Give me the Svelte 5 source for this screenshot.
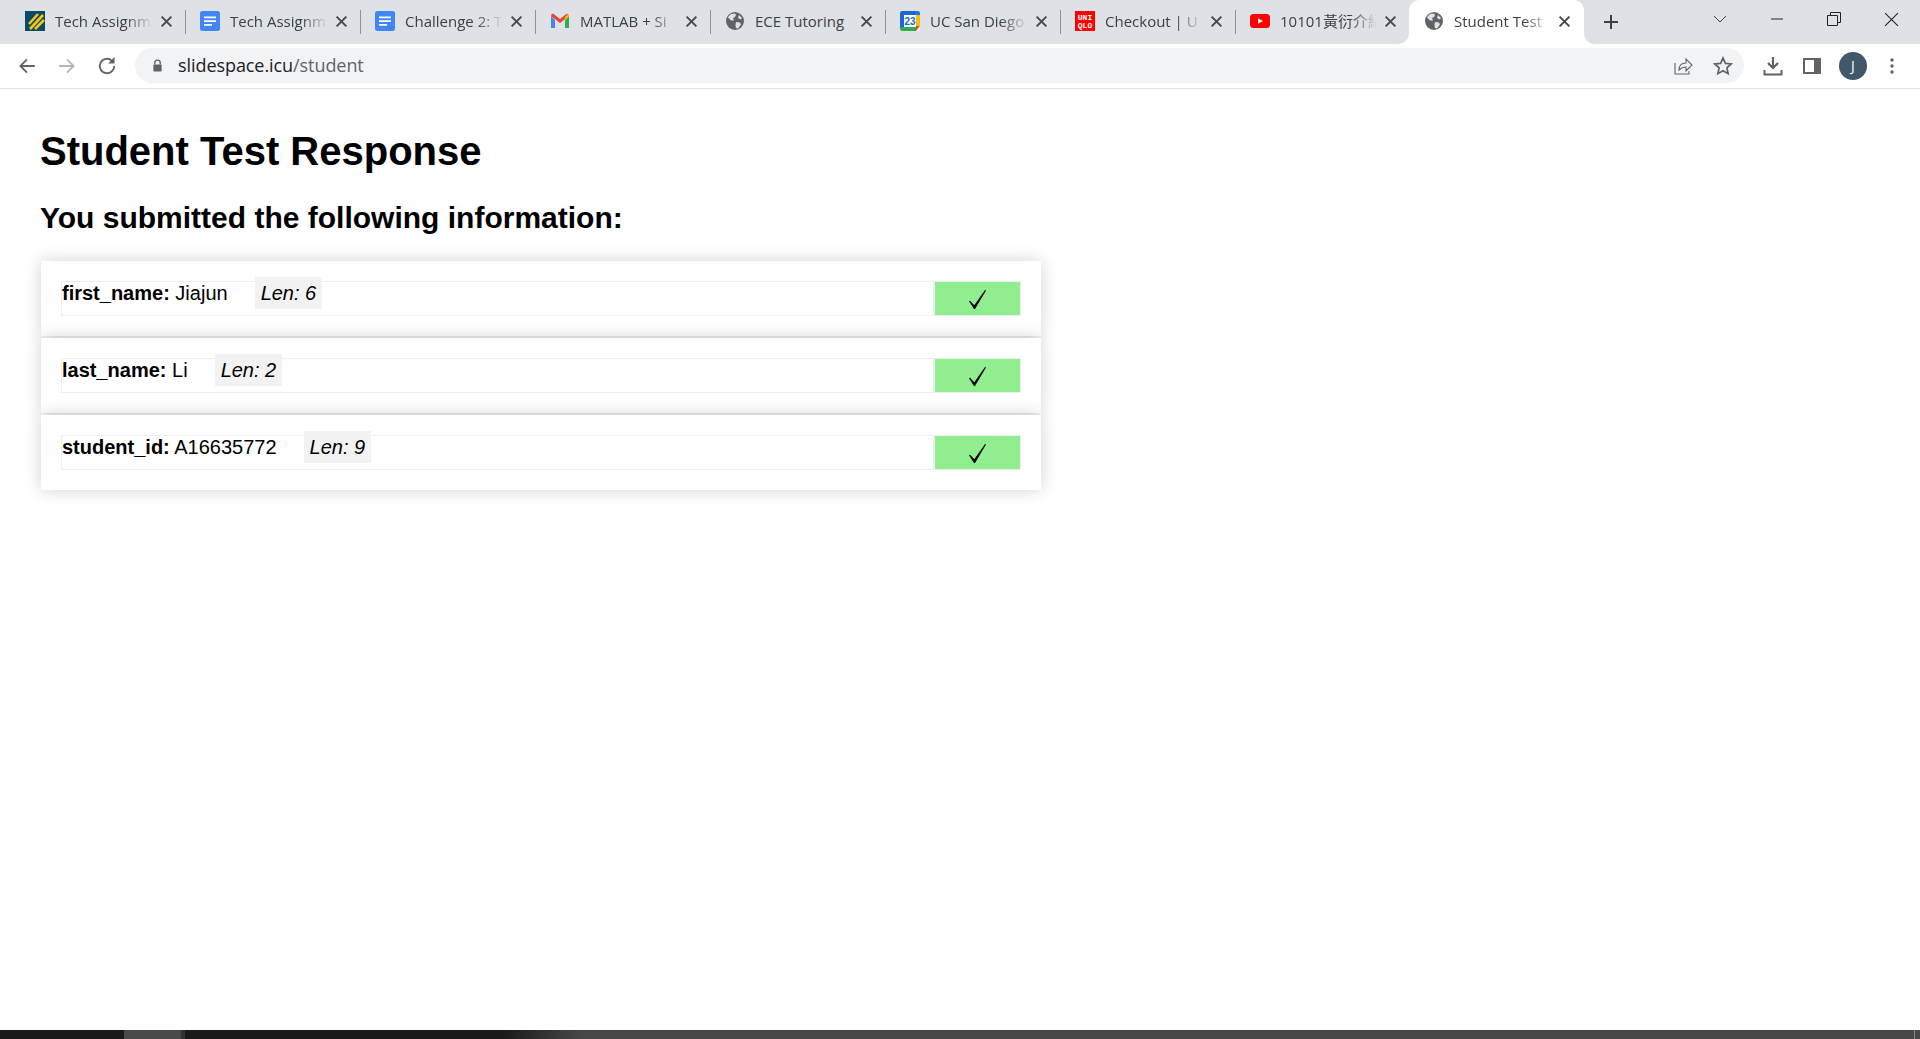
<script>
  const tabs = [
    { icon: 'stripes', title: 'Tech Assignm' },
    { icon: 'doc', title: 'Tech Assignm' },
    { icon: 'doc', title: 'Challenge 2: T' },
    { icon: 'gmail', title: 'MATLAB + Si' },
    { icon: 'globe', title: 'ECE Tutoring', plain: true },
    { icon: 'cal', title: 'UC San Diego' },
    { icon: 'uniqlo', title: 'Checkout | U' },
    { icon: 'yt', title: '10101黃衍介紹' },
    { icon: 'globe', title: 'Student Test', active: true }
  ];
  const rows = [
    { k: 'first_name', v: 'Jiajun', len: 6 },
    { k: 'last_name', v: 'Li', len: 2 },
    { k: 'student_id', v: 'A16635772', len: 9 }
  ];
</script>

{#snippet favicon(kind)}
  <svg class="fav" viewBox="0 0 20 20" aria-hidden="true">
    {#if kind === 'stripes'}
      <rect width="20" height="20" fill="#0b4a66" />
      <path d="M4 13 13 3M5 18 18 4M10 18 19 9" stroke="#f5c518" stroke-width="2.6" fill="none" />
    {:else if kind === 'doc'}
      <rect x="0" y="0" width="20" height="20" rx="2.5" fill="#4285f4" />
      <path d="M4 5.5h12v1.8H4zM4 9.2h12V11H4zM4 13h8v1.8H4z" fill="#fff" />
    {:else if kind === 'gmail'}
      <path d="M1 5v12h4V9z" fill="#4285f4" />
      <path d="M15 9v8h4V5z" fill="#34a853" />
      <path d="M1 5 10 12 19 5 17 2.5 10 8 3 2.5Q1 2.5 1 5Z" fill="#ea4335" />
      <path d="M15 5.8 19 3V5L15 9z" fill="#fbbc04" />
    {:else if kind === 'globe'}
      <circle cx="10" cy="10" r="9" fill="#5f6368" />
      <path d="M3.5 5.5 6 3l4-.5 1 1.5-1 2-2 1 1 2.5H6L3 6.5zM11 11l4 .5 1 2-3 4-2-.5-.5-3zM14 4l3 3-1.5 1.5L13 7z" fill="#dee1e6" />
    {:else if kind === 'cal'}
      <rect width="20" height="20" rx="2" fill="#fff" />
      <path d="M0 2a2 2 0 0 1 2-2h13v4H4v12H0z" fill="#1967d2" />
      <path d="M15 0h3a2 2 0 0 1 2 2v2h-5z" fill="#1a73e8" />
      <path d="M16 4h4v11h-4z" fill="#fbbc04" />
      <path d="M0 16h16v4H2a2 2 0 0 1-2-2z" fill="#34a853" />
      <path d="M16 15h4l-4 5z" fill="#ea4335" />
      <text class="calnum" x="10" y="14.2" text-anchor="middle">23</text>
    {:else if kind === 'uniqlo'}
      <rect width="20" height="20" fill="#f00" />
      <text class="uq" x="10" y="8.6" text-anchor="middle">UNI</text>
      <text class="uq" x="10" y="17" text-anchor="middle">QLO</text>
    {:else if kind === 'yt'}
      <rect x="0" y="3" width="20" height="14" rx="3.5" fill="#f00" />
      <path d="M8 7.2v5.6l5-2.8z" fill="#fff" />
    {/if}
  </svg>
{/snippet}

<div class="window">
  <header class="strip">
    <div class="tabs">
      {#each tabs as t, i}
        <div class="tab" class:active={t.active} class:sep={!t.active && i < tabs.length - 2}>
          {@render favicon(t.icon)}
          <span class="title" class:plain={t.plain}>{t.title}</span>
          <svg class="x" viewBox="0 0 12 12" aria-hidden="true"><path d="M1.5 1.5l9 9M10.5 1.5l-9 9" stroke="#45484d" stroke-width="1.8" /></svg>
        </div>
      {/each}
      <svg class="plus" viewBox="0 0 16 16" aria-hidden="true"><path d="M8 1v14M1 8h14" stroke="#3c4043" stroke-width="2" /></svg>
    </div>
    <div class="controls">
      <svg class="chev" viewBox="0 0 14 8"><path d="M1 1l6 6 6-6" stroke="#3c4043" fill="none" /></svg>
      <svg class="ctl min" viewBox="0 0 14 14"><path d="M1 7h12" stroke="#222" /></svg>
      <svg class="ctl max" viewBox="0 0 14 14"><path d="M.5 3.500h10v10H.5zM3.500 3.500v-3h10v10h-3" stroke="#222" fill="none" /></svg>
      <svg class="ctl close" viewBox="0 0 14 14"><path d="M1 1l12 12M13 1L1 13" stroke="#222" /></svg>
    </div>
  </header>

  <nav class="bar">
    <svg class="nav first" viewBox="0 0 18 18"><path d="M16 9H3M9 3 3 9l6 6" stroke="#5f6368" stroke-width="1.600" fill="none" /></svg>
    <svg class="nav" viewBox="0 0 18 18"><path d="M2 9h13M9 3l6 6-6 6" stroke="#b4b6b9" stroke-width="1.600" fill="none" /></svg>
    <svg class="nav" viewBox="0 0 18 18"><path d="M15.500 9a6.500 6.500 0 1 1-2-4.700" stroke="#5f6368" stroke-width="1.600" fill="none" /><path d="M15.800 1v5.800H10z" fill="#5f6368" /></svg>
    <div class="omni">
      <svg class="lock" viewBox="0 0 12 14"><path d="M3 6V4.200a3 3 0 0 1 6 0V6" stroke="#5f6368" stroke-width="1.500" fill="none" /><rect x="1.500" y="6" width="9" height="7.500" rx="1" fill="#5f6368" /></svg>
      <span class="url"><b>slidespace.icu</b>/student</span>
      <svg class="share" viewBox="0 0 20 20"><path d="M2 7v11h14v-3M6 14c0-5 3-7 7-7V3l6 6-6 6v-4c-3 0-5 1-7 3z" stroke="#5f6368" stroke-width="1.100" fill="none" /></svg>
      <svg class="star" viewBox="0 0 20 20"><path d="M10 2l2.400 5.400 5.800.6-4.300 3.900 1.200 5.800L10 14.800l-5.100 2.900 1.200-5.800L1.800 8l5.800-.6z" stroke="#5f6368" stroke-width="1.700" fill="none" /></svg>
    </div>
    <svg class="tool dl" viewBox="0 0 20 20"><path d="M10 1v10M5 7l5 5 5-5" stroke="#5f6368" stroke-width="2.200" fill="none" /><path d="M1.500 14v4.500h17V14" stroke="#5f6368" stroke-width="2" fill="none" /></svg>
    <svg class="tool side" viewBox="0 0 18 16"><path d="M0 0h18v16H0z" fill="#5f6368" /><path d="M2 2h9v12H2z" fill="#fff" /></svg>
    <span class="avatar">J</span>
    <svg class="dots" viewBox="0 0 4 18"><circle cx="2" cy="3" r="1.700" /><circle cx="2" cy="9" r="1.700" /><circle cx="2" cy="15" r="1.700" /></svg>
  </nav>

  <main class="page">
    <h1>Student Test Response</h1>
    <h2>You submitted the following information:</h2>
    <div class="cards">
      {#each rows as r}
        <section class="card">
          <div class="line">
            <div class="info"><b>{r.k}:</b> {r.v}<i class="len">Len: {r.len}</i></div>
            <div class="ok">
              <svg class="tick" viewBox="0 0 17 19" role="img" aria-label="✓"><path d="M0 11.300 1 10.700 5.300 15.200 16 0 17 .6 6 19H5z" /></svg>
            </div>
          </div>
        </section>
      {/each}
    </div>
  </main>

  <footer class="taskbar">
    <span class="dark"></span>
    <span class="app"></span>
    <span class="fade"></span>
    <span class="clock">17:23</span>
    <span class="show"></span>
  </footer>
</div>

<style>
  :global(body) { margin: 0; background: #fff; }
  .window { height: 1039px; display: flex; flex-direction: column; overflow: hidden; font-family: "Liberation Sans", Arial, sans-serif; color: #000; }

  .strip { height: 44px; flex: none; background: #dee1e6; display: flex; justify-content: space-between; }
  .tabs { display: flex; align-items: flex-start; padding-left: 10px; }
  .tab { width: 175px; height: 44px; box-sizing: border-box; padding: 11px 12px 0 15px; display: flex; align-items: flex-start; position: relative; font-family: "Open Sans", "Noto Sans CJK TC", sans-serif; font-size: 15px; color: #3c4043; }
  .tab.sep::after { content: ""; position: absolute; right: -1px; top: 10px; height: 24px; width: 1px; background: #8f9296; }
  .tab.active { background: #fff; border-radius: 10px 10px 0 0; margin-left: -1px; }
  .tab.active::before, .tab.active::after { content: ""; position: absolute; bottom: 0; width: 10px; height: 10px; }
  .tab.active::before { left: -10px; background: radial-gradient(circle at 0 0, transparent 9.500px, #fff 10px); }
  .tab.active::after { right: -10px; background: radial-gradient(circle at 100% 0, transparent 9.500px, #fff 10px); }
  .fav { width: 20px; height: 20px; flex: none; }
  .title { width: 98px; margin-left: 10px; white-space: nowrap; overflow: hidden; line-height: 21px; -webkit-mask-image: linear-gradient(90deg, #000 72%, transparent 100%); mask-image: linear-gradient(90deg, #000 72%, transparent 100%); }
  .tab:nth-child(n+8) .title { width: 97px; }
  .title.plain { -webkit-mask-image: none; mask-image: none; }
  .x { width: 13px; height: 13px; flex: none; margin: 4px 0 0 7px; }
  .plus { width: 16px; height: 16px; flex: none; margin: 14px 0 0 19px; }
  .calnum { font: 700 10px "Liberation Sans", sans-serif; fill: #1967d2; }
  .uq { font: 700 8px "Liberation Mono", monospace; fill: #fff; }

  .controls { display: flex; align-items: flex-start; padding: 12px 21px 0 0; }
  .chev { width: 14px; height: 8px; margin: 3px 43px 0 0; }
  .ctl { width: 14px; height: 14px; flex: none; }
  .min { margin-right: 43px; }
  .close { width: 15px; height: 15px; margin-left: 43px; }

  .bar { height: 43px; padding-bottom: 1px; flex: none; background: #fff; border-bottom: 1px solid #e3e3e3; display: flex; align-items: center; }
  .nav { width: 20px; height: 20px; flex: none; margin-left: 20px; }
  .nav.first { margin-left: 17px; }
  .omni { width: 1609px; height: 35px; margin-left: 18px; border-radius: 18px; background: #f1f3f4; display: flex; align-items: center; box-sizing: border-box; padding: 0 11px 0 17px; }
  .lock { width: 11px; height: 13px; flex: none; }
  .url { flex: 1; margin-left: 15px; padding-bottom: 2px; font-family: "Open Sans", sans-serif; font-size: 18px; letter-spacing: -.07px; color: #5f6368; }
  .url b { font-weight: 400; color: #202124; }
  .share { width: 20px; height: 20px; margin-right: 20px; }
  .star { width: 20px; height: 20px; }
  .tool { flex: none; }
  .dl { width: 20px; height: 20px; margin-left: 19px; }
  .side { width: 18px; height: 16px; margin-left: 20px; }
  .avatar { width: 28px; height: 28px; margin-left: 18px; border-radius: 50%; background: #41586a; color: #fff; font: 14px/28px "Open Sans", sans-serif; text-align: center; flex: none; }
  .dots { width: 4px; height: 18px; margin-left: 23px; fill: #5f6368; flex: none; }

  .page { flex: 1; padding: 0 40px; font-size: 20px; }
  h1 { margin: 39px 0 0; font-size: 40px; line-height: 46px; font-weight: 700; }
  h2 { margin: 27px 0 0; font-size: 30px; line-height: 34px; font-weight: 700; }
  .cards { width: 1000px; margin-top: 26px; display: flex; flex-direction: column; gap: 2px; margin-left: 1px; }
  .card { height: 75px; box-sizing: border-box; padding: 20px; background: #fff; box-shadow: 0 0 16px rgba(0, 0, 0, .18); }
  .line { height: 35px; display: flex; }
  .info { flex: 1; box-sizing: border-box; border: 1px solid #eee; border-right: 2px solid #eee; line-height: 23px; }
  .len { margin-left: 27px; padding: 5px 6px; background: #f2f2f2; }
  .ok { width: 86px; flex: none; background: #90ee90; border: 1px solid #eee; border-left: 0; box-sizing: border-box; display: flex; justify-content: center; align-items: center; }
  .tick { width: 17px; height: 19px; margin-top: 2px; }

  .taskbar { height: 9px; flex: none; background: #484848; display: flex; overflow: hidden; position: relative; }
  .dark { width: 124px; background: #1a1a1a; }
  .app { width: 57px; background: #4a4a4a; border-right: 4px solid #333; }
  .fade { width: 397px; background: linear-gradient(90deg, #1a1a1a 80%, #484848 100%); }
  .clock { position: absolute; left: 1790px; top: 7px; font: 15px "Open Sans", sans-serif; color: #fff; }
  .show { position: absolute; right: 5px; top: 0; bottom: 0; width: 1px; background: #8a8a8a; }
</style>
